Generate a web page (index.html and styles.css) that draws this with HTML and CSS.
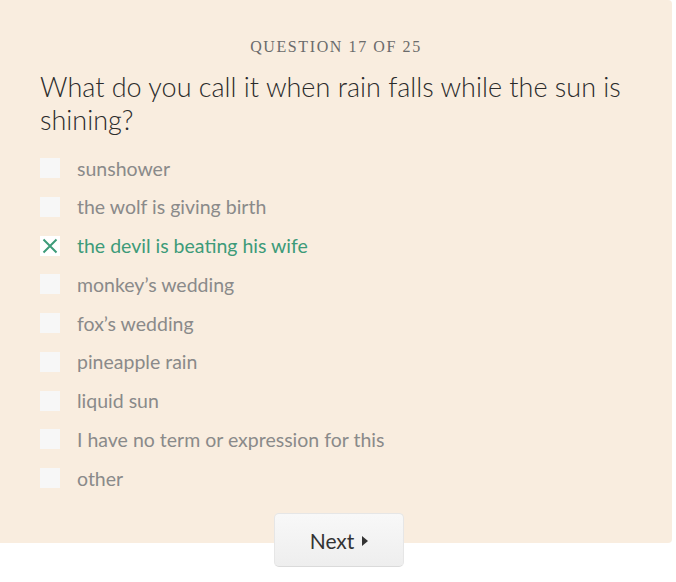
FILE: index.html
```html
<!DOCTYPE html>
<html>
<head>
<meta charset="utf-8">
<link rel="stylesheet" href="styles.css">
</head>
<body>
<div class="panel">
  <div class="kicker">Question 17 of 25</div>
  <h1 class="question">What do you call it when rain falls while the sun is shining?</h1>
  <ul class="options">
    <li class="option"><span class="box"></span><span class="label">sunshower</span></li>
    <li class="option"><span class="box"></span><span class="label">the wolf is giving birth</span></li>
    <li class="option selected"><span class="box"><svg width="20" height="20" viewBox="0 0 20 20"><path d="M3.5 3.5 L16.5 16.5 M16.5 3.5 L3.5 16.5" stroke="#3d9b79" stroke-width="2" fill="none"/></svg></span><span class="label">the devil is beating his wife</span></li>
    <li class="option"><span class="box"></span><span class="label">monkey’s wedding</span></li>
    <li class="option"><span class="box"></span><span class="label">fox’s wedding</span></li>
    <li class="option"><span class="box"></span><span class="label">pineapple rain</span></li>
    <li class="option"><span class="box"></span><span class="label">liquid sun</span></li>
    <li class="option"><span class="box"></span><span class="label">I have no term or expression for this</span></li>
    <li class="option"><span class="box"></span><span class="label">other</span></li>
  </ul>
</div>
<div class="actions">
  <button class="next">Next <span class="arrow"></span></button>
</div>
</body>
</html>
```

FILE: styles.css
```css
html, body {
  margin: 0;
  padding: 0;
  background: #ffffff;
}
.panel {
  width: 672px;
  height: 543px;
  box-sizing: border-box;
  background: #f9eddf;
  border-radius: 0 4px 4px 0;
  padding: 37px 40px 0 40px;
}
.kicker {
  text-align: center;
  font-family: "Liberation Serif", "DejaVu Serif", serif;
  font-size: 16px;
  line-height: 20px;
  letter-spacing: 1.6px;
  text-transform: uppercase;
  color: #6b6b6b;
}
.question {
  margin: 13px 0 0 0;
  font-family: Lato, "Liberation Sans", sans-serif;
  font-weight: 300;
  font-size: 27px;
  line-height: 33px;
  color: #2b2b2b;
}
.options {
  list-style: none;
  margin: 22px 0 0 0;
  padding: 0;
  display: flex;
  flex-direction: column;
  gap: 18.75px;
}
.option {
  display: flex;
  align-items: center;
  height: 20px;
  gap: 17px;
  font-family: Lato, "Liberation Sans", sans-serif;
  font-size: 19.5px;
  color: #8a8a8a;
}
.box {
  width: 20px;
  height: 20px;
  background: #f7f7f7;
  flex: none;
  display: block;
}
.box svg {
  display: block;
}
.selected .box {
  background: #ffffff;
}
.selected .label {
  color: #3d9b79;
}
.actions {
  display: flex;
  justify-content: center;
  margin-top: -30px;
  position: relative;
}
.next {
  width: 130px;
  height: 54px;
  margin-left: 2px;
  border: 1px solid #e6e6e6;
  border-bottom-color: #dadada;
  border-radius: 5px;
  background: linear-gradient(#f8f8f8, #eeeeee);
  font-family: Lato, "Liberation Sans", sans-serif;
  font-size: 21px;
  color: #333333;
  display: flex;
  align-items: center;
  justify-content: center;
  gap: 8px;
  padding: 0;
}
.arrow {
  width: 0;
  height: 0;
  border-top: 5px solid transparent;
  border-bottom: 5px solid transparent;
  border-left: 6px solid #333333;
  margin-top: 2px;
}
```
